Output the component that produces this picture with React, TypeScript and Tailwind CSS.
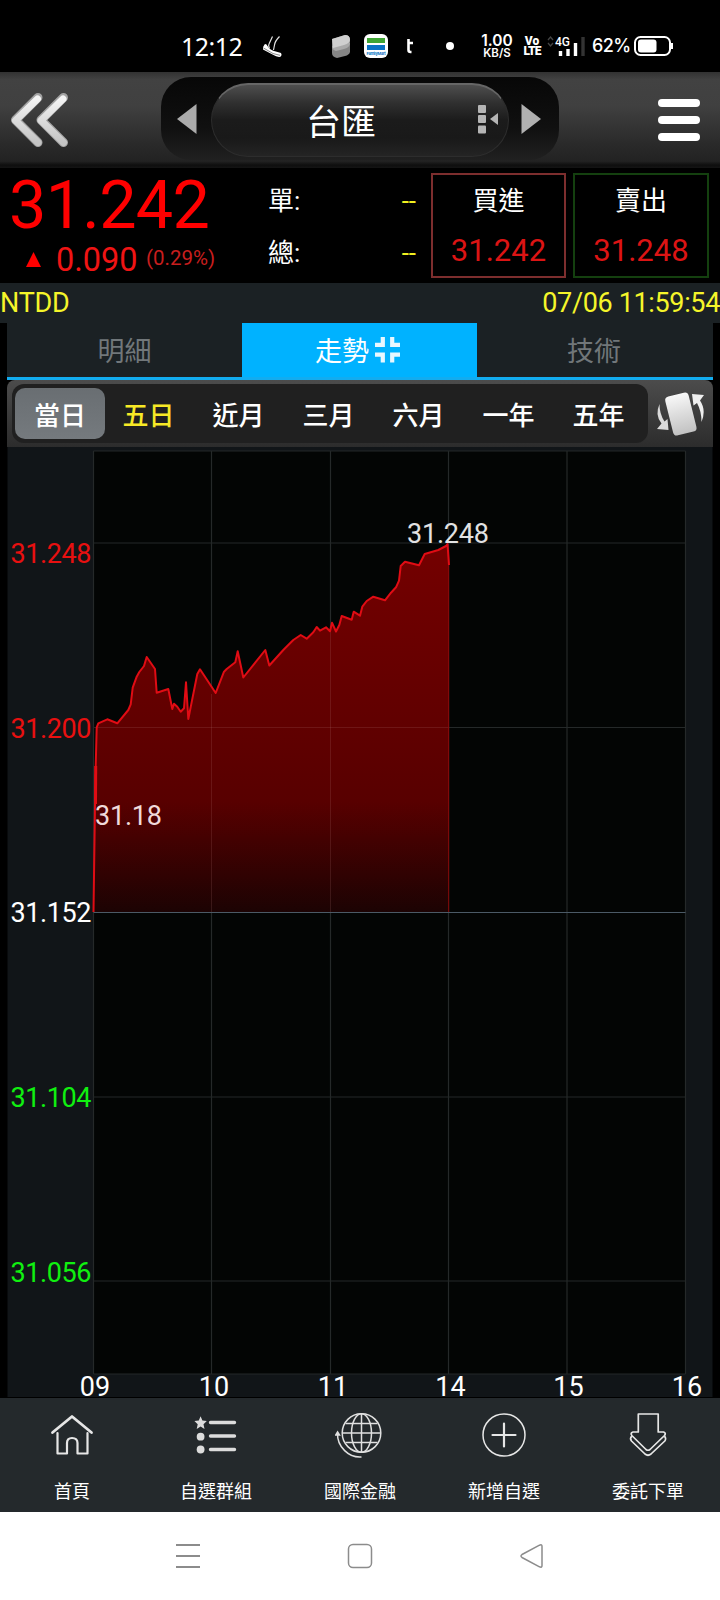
import type { ReactNode } from 'react';
import { clsx } from 'clsx';

interface PeriodItem {
    name: string;
    active?: boolean;
    highlight?: boolean;
}

interface BottomItem {
    name: string;
    icon: ReactNode;
}

const periods: PeriodItem[] = [
    { name: '當日', active: true },
    { name: '五日', highlight: true },
    { name: '近月' },
    { name: '三月' },
    { name: '六月' },
    { name: '一年' },
    { name: '五年' },
];

// grid positions, in page pixels
const gridX = [93.5, 211.5, 330.5, 448.5, 567, 685.5];
const gridY = [451, 543, 727.5, 912.5, 1097, 1281, 1374];

const hours = [
    { label: '09', x: 95 },
    { label: '10', x: 214 },
    { label: '11', x: 333 },
    { label: '14', x: 450.5 },
    { label: '15', x: 568.5 },
    { label: '16', x: 687 },
];

const prices = [
    { label: '31.248', y: 562.5, fill: '#e81010' },
    { label: '31.200', y: 737.5, fill: '#e81010' },
    { label: '31.152', y: 922, fill: '#ffffff' },
    { label: '31.104', y: 1106.5, fill: '#10f010' },
    { label: '31.056', y: 1282, fill: '#10f010' },
];

const line =
    '93.5,912 95,804 95.7,766 96.7,727.3 98.3,723.3 107.3,719.3 117.3,723.3 128.3,710 130.7,704.3 132.7,687.7 136.7,676.7 139.3,672 144,666 146.7,657 155,669 156.7,692.7 168.3,689 172.3,709 174,703.7 177.3,706.7 180.7,711.7 184,708.3 186,682.3 188.3,719 197.3,674 200,669.3 215.7,693 224,671.7 226.7,669 235.3,662.3 237.7,651.3 243.3,677.5 265.3,650 269.3,665.5 283.3,650 293.3,640 300.7,635 306.7,638.7 313.3,632.3 316.7,627 320,630.7 326,627.3 330,631.3 332,622.7 336,631.5 339.3,625 341.7,616 351.7,619.7 353.7,611.7 360,615.7 362.3,606.7 366.7,601 373.3,596.7 385,600.3 391,592.7 396,587.3 399,580.7 400.7,566 405,561.7 419,565.3 424.7,554 438.3,550 446,546 447.5,544 449,565';

function StatusBar() {
    return (
        <div className="flex h-[72px] items-start bg-black pt-[32px] text-white">
            <div className="ml-[181px] w-[66px] font-['Noto_Sans',sans-serif] text-[25px] leading-[28px] tracking-[-0.5px]">12:12</div>
            <svg className="ml-[15px] mt-[3px] h-[24px] w-[22px]" viewBox="0 0 22 24">
                <path d="M2.500 9.500 Q4 8 5.500 11 Q8 15 12 16 L19 18 Q20.500 20 18.500 21.800 Q15 22.500 11 19.800 L1 14.500 Q0.500 12 2.500 9.500 Z" fill="#fff" />
                <path d="M10.500 1.500 L7 9 Q6 11 7.500 13 M17.500 1.500 Q13 6 12.500 10 L11.500 15" stroke="#e4e4e4" strokeWidth="1.200" fill="none" />
                <path d="M1.500 13 L11 18.500 L18 20.300" stroke="#555" strokeWidth=".7" fill="none" />
            </svg>
            <svg className="ml-[48px] mt-[2px] h-[24px] w-[20px]" viewBox="0 0 20 24">
                <path d="M0 5 L13 1 Q18 1 18 6 L18 18 Q17 21 13 22 L5 24 Q0 23 0 19 Z" fill="#858585" />
                <path d="M0 12 L14 7 Q18 8 18 10 Q17 14 12 15 L4 17 Q0 16 0 12 Z" fill="#a9a9a9" />
                <path d="M0 5 L13 1 Q18 1 18 6 Q18 9 12 11 L1 14 Z" fill="#cfcfcf" />
            </svg>
            <div className="ml-[12px] mt-[2px] flex h-[24px] w-[24px] flex-col items-center rounded-[6px] bg-white pt-[4px]">
                <div className="h-[5px] w-[18px] bg-[#3fa535]" />
                <div className="mt-[2px] h-[5px] w-[18px] bg-[#0b72c4]" />
                <div className="mt-[1px] font-['Inter',sans-serif] text-[4px] font-bold leading-[5px] tracking-[-0.3px] text-[#0b72c4]">FamilyMart</div>
            </div>
            <svg className="ml-[18px] mt-[6px] h-[16px] w-[10px]" viewBox="0 0 10 16">
                <path d="M2.500 1 V12 Q2.500 14 4.500 14 H5.500 M2 5 H7" stroke="#fff" strokeWidth="2.600" fill="none" />
            </svg>
            <div className="ml-[30px] mt-[10px] h-[8px] w-[8px] rounded-full bg-white" />
            <div className="ml-[25px] mt-[1px] w-[36px] text-center font-['Inter',sans-serif] font-semibold">
                <div className="text-[15.5px] leading-[15px]">1.00</div>
                <div className="text-[11.5px] leading-[11px]">KB/S</div>
            </div>
            <div className="ml-[7px] mt-[4px] w-[20px] text-center font-['Roboto',sans-serif] text-[12px] font-black leading-[10px]">
                <div>Vo</div>
                <div className="tracking-[-0.8px]">LTE</div>
            </div>
            <svg className="ml-[5px] mt-[3px] h-[22px] w-[40px]" viewBox="0 0 40 22">
                <path d="M1 5 L3.500 2 L6 5 M1 8 L3.500 11 L6 8" stroke="#444" strokeWidth="1.300" fill="none" />
                <text x="8" y="11" fontSize="12" fontWeight="500" fill="#fff" fontFamily="Roboto, sans-serif">4G</text>
                <path d="M13.500 21 V16" stroke="#fff" strokeWidth="3.400" />
                <path d="M21 21 V14" stroke="#fff" strokeWidth="3.400" />
                <path d="M28.500 21 V8" stroke="#fff" strokeWidth="3.400" />
                <path d="M36 21 V2" stroke="#333" strokeWidth="3.400" />
            </svg>
            <div className="ml-[5px] w-[40px] font-['Inter',sans-serif] text-[18px] font-medium leading-[27px] tracking-[-0.6px]">62%</div>
            <svg className="ml-[2px] mt-[4px] h-[20px] w-[40px]" viewBox="0 0 40 20">
                <rect x="1" y="1" width="35" height="18" rx="5.500" stroke="#fff" strokeWidth="2" fill="none" />
                <rect x="4" y="3.500" width="18.500" height="13" rx="3" fill="#fff" />
                <path d="M38 7 V13" stroke="#fff" strokeWidth="2" />
            </svg>
        </div>
    );
}

function Header() {
    return (
        <header className="flex h-[96px] items-start bg-[linear-gradient(180deg,#323232_0%,#424242_8%,#404040_35%,#2a2a2a_75%,#222_93%,#0e0e0e_97%,#141414_100%)]">
            <svg className="ml-[8px] mt-[18px] h-[60px] w-[62px]" viewBox="0 0 62 60">
                <defs>
                    <linearGradient id="arrowFill" x1="0" y1="0" x2="0" y2="1">
                        <stop offset="0" stopColor="#f4f4f4" />
                        <stop offset="1" stopColor="#c4c4c4" />
                    </linearGradient>
                </defs>
                <g stroke="#a2a2a2" strokeWidth="9" strokeLinecap="round" strokeLinejoin="round" fill="none">
                    <path d="M30 7.500 L7.500 30 L30 52.500 M55.500 7.500 L33 30 L55.500 52.500" />
                </g>
                <g stroke="url(#arrowFill)" strokeWidth="7" strokeLinecap="round" strokeLinejoin="round" fill="none">
                    <path d="M29.500 9 L7.500 30.500 L30 52.500 M55 9 L33 30.500 L55.500 52.500" />
                </g>
            </svg>
            <div className="ml-[91px] mt-[5px] flex h-[83px] w-[398px] items-center rounded-[30px] bg-[linear-gradient(180deg,#070707,#101010_60%,#202020)]">
                <svg className="ml-[15px] h-[32px] w-[22px]" viewBox="0 0 22 32">
                    <path d="M1 16 L20.500 1 V31 Z" fill="#ababab" />
                </svg>
                <div className="ml-[13px] mt-[2px] flex h-[74px] w-[298px] items-center rounded-full border border-t-2 border-[#2d2d2d] border-t-[#666] bg-[linear-gradient(180deg,#4e4e4e_0%,#303030_25%,#1b1b1b_50%,#191919_75%,#242424_100%)]">
                    <div className="ml-[94px] w-[73px] font-['Noto_Sans_CJK_TC',sans-serif] text-[35px] leading-[40px] text-white">台匯</div>
                    <svg className="ml-[98px] mt-[-3px] h-[30px] w-[22px]" viewBox="0 0 22 30">
                        <g fill="#b5b5b5">
                            <rect x="1" y="1" width="8" height="8" rx="1" />
                            <rect x="1" y="11" width="8" height="8" rx="1" />
                            <rect x="1" y="21.500" width="8" height="8" rx="1" />
                            <path d="M13 15 L21 9 V21 Z" />
                        </g>
                    </svg>
                </div>
                <svg className="ml-[11px] h-[32px] w-[22px]" viewBox="0 0 22 32">
                    <path d="M1.500 1 V31 L21 16 Z" fill="#b0b0b0" />
                </svg>
            </div>
            <div className="ml-[99px] mt-[27px] flex w-[42px] flex-col gap-[9px]">
                <div className="h-[8px] rounded-full bg-white" />
                <div className="h-[8px] rounded-full bg-white" />
                <div className="h-[8px] rounded-full bg-white" />
            </div>
        </header>
    );
}

function QuotePanel() {
    return (
        <section className="flex h-[115px] bg-black font-['Roboto','Noto_Sans_CJK_TC',sans-serif]">
            <div className="w-[268px] text-[#ff0000]">
                <div className="pl-[9px] pt-[1px] text-[66.5px] leading-[73px] tracking-[-0.7px]">31.242</div>
                <div className="flex items-center leading-[36px]">
                    <svg className="ml-[26px] mt-[-1px] h-[15px] w-[15px]" viewBox="0 0 15 15">
                        <path d="M7.500 0 L15 15 H0 Z" fill="#ff0000" />
                    </svg>
                    <div className="ml-[15px] w-[83px] text-[32.5px] text-[#f01414]">0.090</div>
                    <div className="ml-[7px] mt-[-5px] text-[20.5px] leading-[30px] text-[#c81e1e]">(0.29%)</div>
                </div>
            </div>
            <div className="flex w-[148px] flex-col text-[26px] text-white">
                <div className="mt-[13px] flex h-[40px] items-center justify-between">
                    <span>單:</span>
                    <span className="text-[#f0f020]">--</span>
                </div>
                <div className="mt-[12px] flex h-[40px] items-center justify-between">
                    <span>總:</span>
                    <span className="text-[#f0f020]">--</span>
                </div>
            </div>
            <div className="ml-[15px] mt-[5px] flex h-[105px] w-[135px] flex-col items-center border-2 border-[#7d2e2e]">
                <div className="mt-[6px] text-[26px] leading-[40px] text-white">買進</div>
                <div className="mt-[10px] text-[31px] leading-[40px] text-[#dc1414]">31.242</div>
            </div>
            <div className="ml-[7px] mt-[5px] flex h-[105px] w-[136px] flex-col items-center border-2 border-[#14400f]">
                <div className="mt-[6px] text-[26px] leading-[40px] text-white">賣出</div>
                <div className="mt-[10px] text-[31px] leading-[40px] text-[#dc1414]">31.248</div>
            </div>
        </section>
    );
}

function Tabs() {
    return (
        <nav className="mx-[7px] flex h-[57px] border-b-[3px] border-[#12acf0] font-['Noto_Sans_CJK_TC',sans-serif] text-[27px] leading-[54px]">
            <div className="w-[235px] bg-[#1b2124] text-center text-[#71777a]">明細</div>
            <div className="flex w-[235px] items-center justify-center gap-[6px] bg-[#00b2ff] pr-[3px] text-white">
                <span>走勢</span>
                <svg className="h-[26px] w-[26px]" viewBox="0 0 26 26">
                    <path d="M0 7.800 H7.800 V0 M25 7.800 H17.200 V0 M0 17.700 H7.800 V25.500 M25 17.700 H17.200 V25.500" stroke="#e8f7ff" strokeWidth="4.200" fill="none" />
                </svg>
            </div>
            <div className="flex-1 bg-[#1b2124] pr-[2px] text-center text-[#71777a]">技術</div>
        </nav>
    );
}

function PeriodBar() {
    return (
        <div className="mx-[7px] flex h-[67px] items-center rounded-t-[8px] bg-[linear-gradient(180deg,#4c4c4c,#2c2c2c)]">
            <div className="ml-[5px] flex h-[59px] w-[636px] items-center rounded-[12px] bg-[#202020] pl-[3px]">
                {periods.map((item) => (
                    <div
                        key={item.name}
                        className={clsx(
                            "flex h-[51px] w-[90px] items-center justify-center rounded-[10px] font-['Noto_Sans_CJK_TC',sans-serif] text-[26px] font-medium",
                            item.active ? 'bg-[linear-gradient(180deg,#696e72,#757a7e)]' : 'pr-[3px]',
                            item.highlight ? 'text-[#f7e926]' : 'text-white'
                        )}
                    >
                        <span className="mt-[-1px]">{item.name}</span>
                    </div>
                ))}
            </div>
            <svg className="ml-[6px] h-[50px] w-[51px]" viewBox="0 0 51 50">
                <defs>
                    <linearGradient id="cardFill" x1="0" y1="0" x2="0" y2="1">
                        <stop offset="0" stopColor="#f8f8f8" />
                        <stop offset=".5" stopColor="#dcdcdc" />
                        <stop offset="1" stopColor="#c2c2c2" />
                    </linearGradient>
                </defs>
                <rect x="15" y="5" width="24" height="40" rx="4" fill="url(#cardFill)" transform="rotate(-14 27 25.500)" />
                <path d="M5.500 15 Q0.500 26 7.500 34.500 L3 40 L14.500 41 L13.500 30 L10.500 32.500 Q5.500 25 5.500 15 Z" fill="#dadada" />
                <path d="M47.500 33 Q52.500 21 46 11.500 L50 6 L38 5 L39.500 16.500 L43 14 Q47.500 22 47.500 33 Z" fill="#efefef" />
            </svg>
        </div>
    );
}

function TrendChart() {
    return (
        <svg className="block h-[951px] w-[720px] overflow-visible bg-black" viewBox="0 447 720 951" fontFamily="Roboto, sans-serif" fontSize="27">
            <defs>
                <linearGradient id="areaFill" gradientUnits="userSpaceOnUse" x1="0" y1="544" x2="0" y2="912">
                    <stop offset="0" stopColor="#740000" />
                    <stop offset=".7" stopColor="#580000" />
                    <stop offset="1" stopColor="#1c0303" />
                </linearGradient>
            </defs>
            <rect x="7.500" y="447" width="705" height="950" fill="#111518" />
            <rect x="93.500" y="451" width="592" height="923" fill="#030504" />
            <g stroke="#252929" strokeWidth="1.200">
                {gridX.map((x) => (
                    <line key={x} x1={x} x2={x} y1="451" y2="1374" />
                ))}
                {gridY.map((y) => (
                    <line key={y} x1="93.500" x2="685.500" y1={y} y2={y} />
                ))}
            </g>
            <polygon points={`${line} 449,912 93.5,912`} fill="url(#areaFill)" />
            {/* grid lines showing through the area */}
            <path d="M211.500 694 V912 M330.500 632 V912 M97 727.500 H449" stroke="#c08080" strokeOpacity=".17" fill="none" />
            <line x1="93.500" x2="685.500" y1="912.500" y2="912.500" stroke="#4b5a66" />
            <line x1="448.700" x2="448.700" y1="550" y2="912" stroke="#8a0c0c" />
            <polyline points={line} fill="none" stroke="#e00c14" strokeWidth="2" strokeLinejoin="round" />
            <path d="M95.700 766 L95.500 804" stroke="#e00c14" strokeWidth="3" />
            {prices.map((p) => (
                <text key={p.label} x="10.500" y={p.y} fill={p.fill} textLength="81">
                    {p.label}
                </text>
            ))}
            <text x="407" y="543" fill="#e2e2e2" textLength="82">31.248</text>
            <text x="95" y="824.500" fill="#f0dada" textLength="67">31.18</text>
            <g fill="#fff" textAnchor="middle">
                {hours.map((h) => (
                    <text key={h.label} x={h.x} y="1395.500">
                        {h.label}
                    </text>
                ))}
            </g>
        </svg>
    );
}

const bottomItems: BottomItem[] = [
    {
        name: '首頁',
        icon: (
            <svg className="h-[46px] w-[46px]" viewBox="0 0 46 46" fill="none" stroke="#e6e6e6" strokeLinecap="round" strokeLinejoin="round">
                <path d="M3.500 20.500 L23 4.500 L42.500 20.500" strokeWidth="2.800" />
                <path d="M8.500 21 V41.500 H18 V31 Q18 26 23 26 Q28.500 26 28.500 31 V41.500 H38.500 V21" strokeWidth="2.200" />
            </svg>
        ),
    },
    {
        name: '自選群組',
        icon: (
            <svg className="mt-[1px] h-[46px] w-[46px]" viewBox="0 0 46 46" fill="#dcdcdc">
                <path d="M7.600 3.300 L9.400 7.600 L13.800 8 L10.500 11.200 L11.500 16 L7.600 13.500 L3.700 16 L4.700 11.200 L1.400 8 L5.800 7.600 Z" />
                <circle cx="7.600" cy="23.700" r="3.900" />
                <circle cx="7.600" cy="36.500" r="3.900" />
                <path d="M17.500 9.500 H41.500 M17.500 23 H41.500 M17.500 36.500 H41.500" stroke="#dcdcdc" strokeWidth="3.400" strokeLinecap="round" />
            </svg>
        ),
    },
    {
        name: '國際金融',
        icon: (
            <svg className="h-[48px] w-[50px]" viewBox="0 0 50 48" fill="none" stroke="#e0e0e0" strokeWidth="1.500">
                <circle cx="26.500" cy="21" r="19.300" />
                <ellipse cx="26.500" cy="21" rx="10" ry="19.300" />
                <path d="M26.500 1.500 V40.500 M7 21 H46 M10.500 11.500 H42.500 M10.500 30.500 H42.500" />
                <path d="M2.500 21 C2 35 14 46 26.500 45" />
                <path d="M0.800 23 L2.600 20 L4.500 23 Z" fill="#e0e0e0" />
            </svg>
        ),
    },
    {
        name: '新增自選',
        icon: (
            <svg className="h-[46px] w-[46px]" viewBox="0 0 46 46" fill="none" stroke="#e6e6e6" strokeLinecap="round">
                <circle cx="23" cy="23" r="21" strokeWidth="1.500" />
                <path d="M11.500 23 H34.500 M23 11.500 V34.500" strokeWidth="2.200" />
            </svg>
        ),
    },
    {
        name: '委託下單',
        icon: (
            <svg className="h-[46px] w-[46px]" viewBox="0 0 46 46" fill="none" stroke="#e6e6e6" strokeWidth="1.700" strokeLinejoin="round">
                <path d="M13.300 2 H33.200 V20 H38.500 Q41.500 21 39.500 23.500 L25 37.500 Q23 39 21 37.500 L6.800 23.500 Q5 21 8 20 H13.300 Z" />
                <path d="M6.800 24 Q4.500 26.500 6.500 29 L20 42 Q23 44.500 26 42 L39.800 29 Q41.500 26.500 39.500 24" />
            </svg>
        ),
    },
];

function BottomNav() {
    return (
        <nav className="grid h-[114px] grid-cols-5">
            {bottomItems.map((item) => (
                <div key={item.name} className="flex flex-col items-center bg-[#24292c] pt-[14px] text-white">
                    <div className="flex h-[48px] items-start">{item.icon}</div>
                    <span className="mt-[17px] font-['Noto_Sans_CJK_TC',sans-serif] text-[18px] leading-[26px]">{item.name}</span>
                </div>
            ))}
        </nav>
    );
}

function SystemNav() {
    return (
        <div className="flex h-[88px] items-center justify-center gap-[146px] bg-white">
            <svg className="h-[26px] w-[26px]" viewBox="0 0 26 26">
                <path d="M1 2 H25 M1 13 H25 M1 24 H25" stroke="#8c8c8c" strokeWidth="2" />
            </svg>
            <svg className="h-[26px] w-[26px]" viewBox="0 0 26 26">
                <rect x="1.500" y="1.500" width="23" height="23" rx="4.500" stroke="#8c8c8c" strokeWidth="1.500" fill="none" />
            </svg>
            <svg className="h-[26px] w-[26px]" viewBox="0 0 26 26">
                <path d="M3 11.500 Q1 13 3 14.500 L20.500 23.800 Q23 25 23 22.500 V3.500 Q23 1 20.500 2.200 Z" stroke="#8c8c8c" strokeWidth="1.500" fill="none" strokeLinejoin="round" />
            </svg>
        </div>
    );
}

export default function App() {
    return (
        <main className="h-[1600px] w-[720px] overflow-hidden bg-black">
            <StatusBar />
            <Header />
            <QuotePanel />
            <div className="flex h-[40px] items-center justify-between bg-[#1b2124] font-['Roboto',sans-serif] text-[27px] leading-[40px] text-[#f5f52a]">
                <span className="tracking-[-0.2px]">NTDD</span>
                <span className="tracking-[-0.35px]">07/06 11:59:54</span>
            </div>
            <Tabs />
            <PeriodBar />
            <TrendChart />
            <BottomNav />
            <SystemNav />
        </main>
    );
}
